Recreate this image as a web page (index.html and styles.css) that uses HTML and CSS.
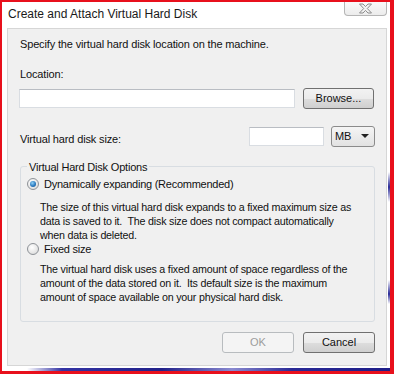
FILE: index.html
```html
<!DOCTYPE html>
<html lang="en">
<head>
  <meta charset="UTF-8">
  <title>Create and Attach Virtual Hard Disk</title>
  <link rel="stylesheet" href="styles.css">
</head>
<body>
  <div class="frame">
    <div class="titlebar">
      <span class="title">Create and Attach Virtual Hard Disk</span>
      <button class="close" aria-label="Close">
        <svg width="15" height="11" viewBox="0 0 15 11">
          <path d="M1.5 1 H5 L7.5 3.6 L10 1 H13.5 L9.3 5.5 L13.5 10 H10 L7.5 7.4 L5 10 H1.5 L5.7 5.5 Z" fill="#f4f4f4" stroke="#8c8c8c" stroke-width="1" stroke-linejoin="round"/>
        </svg>
      </button>
    </div>

    <div class="panel">
      <p class="intro">Specify the virtual hard disk location on the machine.</p>

      <label class="label" for="location">Location:</label>
      <div class="row">
        <input class="field field-location" id="location" type="text">
        <button class="btn btn-browse">Browse...</button>
      </div>

      <div class="row row-size">
        <label class="label-inline" for="size">Virtual hard disk size:</label>
        <input class="field field-size" id="size" type="text">
        <div class="select">
          <span>MB</span>
          <span class="arrow"></span>
        </div>
      </div>

      <fieldset class="group">
        <legend>Virtual Hard Disk Options</legend>

        <div class="option">
          <span class="radio checked"></span>
          <span>Dynamically expanding (Recommended)</span>
        </div>
        <p class="desc desc-first">
          The size of this virtual hard disk expands to a fixed maximum size as<br>
          data is saved to it.&nbsp; The disk size does not compact automatically<br>
          when data is deleted.
        </p>

        <div class="option">
          <span class="radio"></span>
          <span>Fixed size</span>
        </div>
        <p class="desc">
          The virtual hard disk uses a fixed amount of space regardless of the<br>
          amount of the data stored on it.&nbsp; Its default size is the maximum<br>
          amount of space available on your physical hard disk.
        </p>
      </fieldset>

      <div class="actions">
        <button class="btn" disabled>OK</button>
        <button class="btn">Cancel</button>
      </div>
    </div>

    <div class="shadow"></div>
  </div>
</body>
</html>
```

FILE: styles.css
```css
* {
  margin: 0;
  padding: 0;
  box-sizing: border-box;
}

body {
  font-family: "Liberation Sans", Arial, sans-serif;
  font-size: 11px;
  letter-spacing: -0.15px;
  color: #111;
  background: #fff;
}

.frame {
  width: 394px;
  height: 374px;
  border: solid #e8101c;
  border-width: 2px 4px 3px 2px;
  background:
    linear-gradient(to bottom, transparent 0, transparent 170px, #2a2a96 185px, transparent 200px,
      transparent 278px, #2a2a96 292px, transparent 302px) right top / 2px 100% no-repeat,
    #fff;
  display: flex;
  flex-direction: column;
}

/* title bar */

.titlebar {
  height: 26px;
  display: flex;
  justify-content: space-between;
  align-items: flex-start;
}

.title {
  font-size: 12px;
  letter-spacing: 0;
  line-height: 15px;
  color: #1a1a1a;
  padding: 5px 0 0 6px;
}

.close {
  width: 43px;
  height: 14px;
  margin-right: 3px;
  border: 1px solid #b5b5b5;
  border-top: none;
  border-radius: 0 0 4px 4px;
  background: linear-gradient(#fafafa, #ececec);
  display: flex;
  align-items: center;
  justify-content: center;
}

/* main panel */

.panel {
  height: 339px;
  margin: 0 3px 0 5px;
  border: 1px solid #d6d6d6;
  background: #f0f0f0;
  padding: 8px 11px 0 12px;
  display: flex;
  flex-direction: column;
}

.intro {
  line-height: 15px;
  margin-bottom: 15px;
}

.label {
  line-height: 15px;
  margin-bottom: 6px;
}

.row {
  display: flex;
  align-items: center;
  gap: 8px;
}

.field {
  height: 19px;
  border: 1px solid #d9dde2;
  border-top-color: #b9bdc3;
  background: #fff;
}

.field-location {
  width: 276px;
  margin-left: -1px;
}

.btn {
  width: 72px;
  height: 21px;
  border: 1px solid #707070;
  border-radius: 3px;
  font-family: inherit;
  font-size: 11px;
  color: #111;
  background: linear-gradient(#f2f2f2 0%, #ebebeb 50%, #dddddd 51%, #cfcfcf 100%);
}

.btn-browse {
  width: 71px;
}

.btn:disabled {
  border-color: #b8bcbf;
  background: #f4f4f4;
  color: #9c9c9c;
}

.row-size {
  margin-top: 17px;
}

.label-inline {
  flex: 1;
  padding-top: 5px;
}

.field-size {
  width: 75px;
  margin-right: -1px;
}

.select {
  width: 44px;
  height: 21px;
  border: 1px solid #8b8b8b;
  border-radius: 3px;
  background: linear-gradient(#f5f5f5, #e2e2e2);
  display: flex;
  align-items: center;
  justify-content: space-between;
  padding: 0 5px 0 3px;
}

.arrow {
  width: 0;
  height: 0;
  border-left: 4px solid transparent;
  border-right: 4px solid transparent;
  border-top: 4px solid #222;
}

/* options group */

.group {
  margin-top: 13px;
  border: 1px solid #d8dde2;
  border-radius: 3px;
  padding: 3px 0 17px 6px;
}

.group legend {
  padding: 0 2px;
  line-height: 14px;
  letter-spacing: -0.2px;
}

.option {
  display: flex;
  align-items: center;
  gap: 5px;
  line-height: 15px;
  letter-spacing: -0.25px;
}

.radio {
  width: 12px;
  height: 12px;
  border-radius: 50%;
  border: 1px solid #8e9297;
  background: radial-gradient(circle at 40% 35%, #fff 0, #e6e6e6 60%, #cfd2d6 100%);
  display: flex;
  align-items: center;
  justify-content: center;
}

.radio.checked::after {
  content: "";
  width: 6px;
  height: 6px;
  border-radius: 50%;
  background: radial-gradient(circle at 40% 35%, #8fd0f5 0, #2a7ac0 55%, #124d8a 100%);
}

.desc {
  font-size: 10.7px;
  letter-spacing: -0.2px;
  line-height: 14px;
  white-space: nowrap;
  margin: 5px 0 0 13px;
}

.desc-first {
  margin-top: 8px;
}

/* bottom buttons */

.actions {
  margin-top: 10px;
  display: flex;
  justify-content: flex-end;
  gap: 9px;
}

.actions .btn {
  width: 72px;
  height: 21px;
}

.shadow {
  height: 3px;
  margin-top: 2px;
  background: linear-gradient(to right, transparent 0, transparent 25px, #3434a4 60px, #22228a 160px,
    #8a8ad0 230px, #2a2a96 290px, #1e1e88 390px);
}
```
